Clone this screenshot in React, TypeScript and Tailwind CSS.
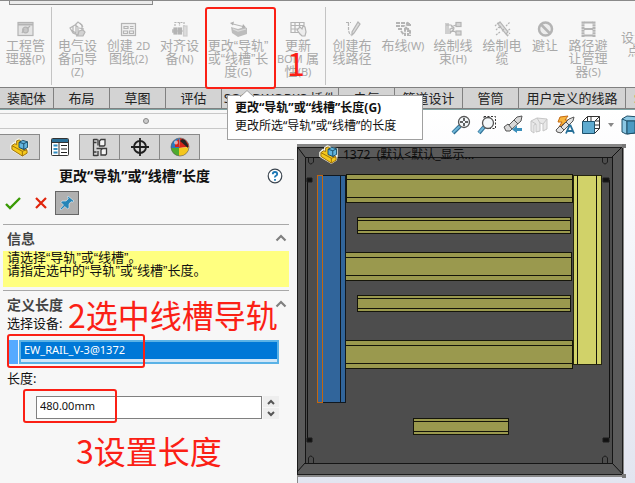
import React from "react";

const sans = "font-['Noto_Sans','Noto_Sans_CJK_SC',sans-serif]";

function Q({ children }: { children: React.ReactNode }) {
  return <span className="font-['Liberation_Sans',sans-serif] leading-none">{children}</span>;
}

function L({ children }: { children: React.ReactNode }) {
  return <span className="text-[11px] leading-none">{children}</span>;
}

function RibbonIcon({ children }: { children: React.ReactNode }) {
  return (
    <svg width="17" height="16" viewBox="0 0 17 16" fill="none" stroke="#b4b4b4" strokeWidth="1.2" aria-hidden="true">
      {children}
    </svg>
  );
}

function RibbonButton({ width, icon, children }: { width: string; icon?: React.ReactNode; children: React.ReactNode }) {
  return (
    <button
      type="button"
      className={`${width} flex shrink-0 flex-col items-center gap-[2px] pt-5 text-[13px] leading-[13px] whitespace-nowrap text-[#a9a9a9]`}
    >
      {icon}
      <span>{children}</span>
    </button>
  );
}

function Separator() {
  return <div className="mt-[6px] h-[78px] w-px shrink-0 bg-[#c4c4c4]" />;
}

function Ribbon() {
  return (
    <div className="relative flex h-[87px] overflow-hidden border-t border-[#8a8a8a] bg-[#f7f7f7]">
      <div className="absolute -top-px left-[9px] h-[5px] w-[144px] border border-t-0 border-[#8a8a8a] bg-[#ebebeb]" />
      <RibbonButton
        width="w-[51px]"
        icon={
          <RibbonIcon>
            <rect x="1" y="1.5" width="15" height="13" fill="#e4e4e4" />
            <path d="M1 3.5h15" strokeWidth="2" />
            <circle cx="8.5" cy="9" r="2.8" fill="#c8c8c8" />
            <path d="M5 12l2-4M10 8l3-3" />
          </RibbonIcon>
        }
      >
        工程管
        <br />
        理器<L>(P)</L>
      </RibbonButton>
      <Separator />
      <RibbonButton
        width="w-[51px]"
        icon={
          <RibbonIcon>
            <path d="M1 7l5-3 3 2v8l-5-2zM6 4l3-3 4 3v5M2 9l5 3M4 5v7M7 3v10" />
            <path d="M9 14l1-4 4-1 2 2-2 4H7z" fill="#d2d2d2" />
            <path d="M11 2l3 4M10 7l5 1" />
          </RibbonIcon>
        }
      >
        电气设
        <br />
        备向导
        <br />
        <L>(Z)</L>
      </RibbonButton>
      <RibbonButton
        width="w-[51px]"
        icon={
          <RibbonIcon>
            <rect x="1.5" y="2.5" width="14" height="12" fill="#efefef" />
            <path d="M4 5.5h4v2H4zM10 5.5h3.500M10 7.500h3.500M3.500 10h4v2.500h-4zM9.500 10h4v2.500h-4z" />
          </RibbonIcon>
        }
      >
        创建 <L>2D</L>
        <br />
        图纸<L>(2)</L>
      </RibbonButton>
      <RibbonButton
        width="w-[51px]"
        icon={
          <RibbonIcon>
            <path d="M4 5V1.500h9V5M8.500 1.500V5" strokeDasharray="2 1" />
            <path d="M2 8v4M1 10h15" />
            <rect x="3" y="7" width="3" height="6" fill="#b4b4b4" />
            <rect x="7.500" y="7" width="3" height="6" fill="#b4b4b4" />
            <rect x="12.500" y="5" width="3.500" height="10" fill="#dcdcdc" stroke="#cdcdcd" />
          </RibbonIcon>
        }
      >
        对齐设
        <br />
        备<L>(N)</L>
      </RibbonButton>
      <RibbonButton
        width="w-[66px]"
        icon={
          <RibbonIcon>
            <path d="M1 6l7 2 6-2 3 1v6l-9 3-6-4z" fill="#bdbdbd" stroke="none" />
            <path d="M3 3l10 2.500" strokeWidth="1" />
            <path d="M0 2l4-1.500-1 4zM16 6.500l-4 .5 1-4z" fill="#b0b0b0" stroke="none" />
            <path d="M3 8l5 2 8-2" stroke="#dcdcdc" />
          </RibbonIcon>
        }
      >
        更改<Q>“</Q>导轨<Q>”</Q>
        <br />
        或<Q>“</Q>线槽<Q>”</Q>长
        <br />
        度<L>(G)</L>
      </RibbonButton>
      <RibbonButton
        width="w-[54px]"
        icon={
          <RibbonIcon>
            <path d="M1 1.500h13v10H1zM1 4.500h13M1 8h13M5 1.500v10M9.500 1.500v10" />
            <path d="M7 9l3 4 2 2h3l1-4-1-5-2-1-1 3-2-2z" fill="#ededed" />
          </RibbonIcon>
        }
      >
        更新
        <br />
        <L>BOM</L> 属
        <br />
        性<L>(B)</L>
      </RibbonButton>
      <Separator />
      <RibbonButton
        width="w-[52px]"
        icon={
          <RibbonIcon>
            <path d="M2 1.500h5M4.500 2v6q0 5 3 6" strokeDasharray="3 1" />
            <path d="M14 1l2 2-6 9-2 2 0-3z" fill="#dedede" />
          </RibbonIcon>
        }
      >
        创建布
        <br />
        线路径
      </RibbonButton>
      <RibbonButton
        width="w-[50px]"
        icon={
          <RibbonIcon>
            <path d="M1 2h9l5 1M1 5h8q1 0 1 2v8M3 8h3v2l3 4M13 1l-2 6 4 3v5M12 4h4M13 7v8" strokeDasharray="4 1" strokeWidth="2" />
          </RibbonIcon>
        }
      >
        布线<L>(W)</L>
      </RibbonButton>
      <RibbonButton
        width="w-[50px]"
        icon={
          <RibbonIcon>
            <path d="M1 2v11M3 2v11M1 4h5l3 3-4 1v5M6 6l5-2M7 9l5 3M5 12l4-4" />
            <rect x="11" y="1.500" width="5" height="4" fill="#d6d6d6" />
            <rect x="11" y="10" width="5" height="4" fill="#d6d6d6" />
          </RibbonIcon>
        }
      >
        绘制线
        <br />
        束<L>(H)</L>
      </RibbonButton>
      <RibbonButton
        width="w-[48px]"
        icon={
          <RibbonIcon>
            <path d="M1 5l4-4M2 9l3-3M12 5l4-4M12 11l4-3M2 14l4-3M13 15l3-3" strokeDasharray="2 1" />
            <path d="M4 3l2-2 8 10-2 2zM7 5l-2 2M10 8l-2 2M12 13l2 2" fill="#dedede" />
          </RibbonIcon>
        }
      >
        绘制电
        <br />
        缆
      </RibbonButton>
      <RibbonButton
        width="w-[38px]"
        icon={
          <RibbonIcon>
            <circle cx="8.500" cy="8" r="6.500" strokeWidth="2.500" fill="#ededed" />
            <path d="M4 3.500l9 9" strokeWidth="2.500" />
          </RibbonIcon>
        }
      >
        避让
      </RibbonButton>
      <RibbonButton
        width="w-[48px]"
        icon={
          <RibbonIcon>
            <path d="M3 0.500v15.500M14 0.500v15.500" strokeWidth="3" strokeDasharray="2.200 0.500" />
            <path d="M4 1.500h9M4 8h9M4 14.500h9" strokeWidth="2" />
          </RibbonIcon>
        }
      >
        路径避
        <br />
        让管理
        <br />
        器<L>(S)</L>
      </RibbonButton>
      <button type="button" className="w-11 shrink-0 text-[13px] leading-[13px] whitespace-nowrap text-[#a9a9a9]">
        设置
        <br />
        点
      </button>
    </div>
  );
}

const tabs = [
  { label: "装配体", width: "w-[54px]" },
  { label: "布局", width: "w-14" },
  { label: "草图", width: "w-14" },
  { label: "评估", width: "w-14" },
  { label: "SOLIDWORKS 插件", width: "w-[117px]" },
  { label: "电气", width: "w-14" },
  { label: "管道设计", width: "w-[68px]" },
  { label: "管筒", width: "w-14" },
  { label: "用户定义的线路", width: "w-[107px]" },
];

function CommandTabs() {
  return (
    <nav className="flex h-[23px] overflow-hidden border-t border-b border-t-[#808080] border-b-[#7fa3a3] bg-[#d3d3d3] text-[13px] leading-5 whitespace-nowrap text-[#222]">
      {tabs.map((t) => (
        <button key={t.label} type="button" className={`${t.width} shrink-0 border-r border-b border-[#808080]`}>
          {t.label}
        </button>
      ))}
      <button type="button" className="shrink-0 border-b border-[#808080] pl-2 text-[#e09020]">
        S
      </button>
    </nav>
  );
}

function PartIcon({ size }: { size: number }) {
  return (
    <svg width={size} height={size} viewBox="0 0 20 20" strokeLinejoin="round" aria-hidden="true">
      <path d="M1 8l3-3 2 1V3l3-2 4 2 6 1v8l-1 4-5 3-12-7z" fill="#fff" stroke="#f4f4e8" strokeWidth="1.500" />
      <path d="M2 8l3-2 2 1V3l3-1 2 2v7l6 2v3l-5 3-11-7z" fill="#f5c91c" stroke="#9a6d08" />
      <path d="M2 8l11 6v5M13 14l5-2" fill="none" stroke="#9a6d08" />
      <path d="M9.500 4.500l4-2 5 1.500v6l-4 2-5-2z" fill="#62b4de" stroke="#174c68" />
      <path d="M9.500 4.500l5 1.500v6M14.500 6l4-2" fill="none" stroke="#174c68" />
    </svg>
  );
}

const panelTabIcons = [
  {
    name: "特征树",
    icon: <PartIcon size={19} />,
  },
  {
    name: "属性",
    icon: (
      <svg width="18" height="18" viewBox="0 0 18 18" aria-hidden="true">
        <rect x="0.500" y="0.500" width="17" height="17" rx="1" fill="#fff" stroke="#333" />
        <path d="M1 1h16v3H1z" fill="#2b6f96" />
        <path d="M1 4.500h16M8 4v13" stroke="#333" fill="none" />
        <path d="M2.500 7.500h4M2.500 11h4M2.500 14.500h4" stroke="#2f8bc0" strokeWidth="2" />
        <path d="M10 7.500h6M10 11h6M10 14.500h6" stroke="#222" strokeWidth="1.200" />
      </svg>
    ),
  },
  {
    name: "配置",
    icon: (
      <svg width="16" height="19" viewBox="0 0 16 19" fill="none" stroke="#3c3c3c" strokeWidth="1.300" aria-hidden="true">
        <path d="M1.500 1v17M1.500 1.500h4M1.500 4.500h3M1.500 17.500h4M1.500 14h3M4.500 10.500h6M6 1.500v6M6 13v5" />
        <path d="M7.500 3l1.500-1.500h4V7l-1 1H7.500zM9 12l1.500-1.500h4V16l-1 1H9z" fill="#f5f5f5" />
      </svg>
    ),
  },
  {
    name: "尺寸",
    icon: (
      <svg width="18" height="18" viewBox="0 0 18 18" fill="none" stroke="#1f1f1f" aria-hidden="true">
        <circle cx="9" cy="9" r="6" strokeWidth="1.800" />
        <path d="M9 0v18M0 9h18" strokeWidth="1.800" />
      </svg>
    ),
  },
  {
    name: "外观",
    icon: (
      <svg width="20" height="20" viewBox="0 0 20 20" aria-hidden="true">
        <circle cx="10" cy="10" r="9" fill="#fff" />
        <path d="M10 1a9 9 0 0 0-9 10h8z" fill="#2d77bd" />
        <path d="M10 1a9 9 0 0 1 9 9l-10 1z" fill="#d52418" />
        <path d="M1 11a9 9 0 0 0 8 8v-8z" fill="#4faa2d" />
        <path d="M9 19a9 9 0 0 0 10-9l-10 1z" fill="#f4c61d" />
        <path d="M10 4l2-2 3 1 3 5v3z" fill="#222" />
        <path d="M5 5l4-3v8H5z" fill="#d52418" />
        <circle cx="6" cy="5.500" r="2" fill="#fff" opacity="0.600" />
        <circle cx="10" cy="10" r="9" fill="none" stroke="#555" strokeWidth="0.600" />
      </svg>
    ),
  },
];

function Chevron() {
  return (
    <svg width="12" height="8" viewBox="0 0 12 8" fill="none" stroke="#808080" strokeWidth="2.200" aria-hidden="true">
      <path d="M1.500 6.500L6 2l4.500 4.500" />
    </svg>
  );
}

function SectionHeader({ children }: { children: React.ReactNode }) {
  return (
    <div className="flex h-[27px] items-center justify-between border-t border-[#a8a8a8] pr-[2px] pl-1 text-[#444]">
      <h2 className="text-[14px] font-bold">{children}</h2>
      <button type="button" aria-label="折叠">
        <Chevron />
      </button>
    </div>
  );
}

function PropertyPanel() {
  return (
    <aside className="w-[297px] shrink-0 bg-[#f7f7f7] pt-[3px] text-[13px] text-[#111]">
      <div className="flex h-4 items-center justify-center border-t border-b border-[#c8c8c8] pr-[6px]">
        <span className="h-[6px] w-[6px] rounded-full border border-[#888] bg-[#ccc]" />
      </div>
      <div className="mt-[5px] mr-[3px] flex h-[26px]">
        {panelTabIcons.map((t, i) => (
          <button
            key={t.name}
            type="button"
            aria-label={t.name}
            className={
              i === 1
                ? "flex w-10 items-center justify-center border-r border-[#8a8a8a]"
                : "flex w-10 items-center justify-center border-t border-r border-b border-[#8a8a8a] bg-[#d5d5d5]"
            }
          >
            {t.icon}
          </button>
        ))}
        <div className="flex-1 border-b border-[#a8a8a8]" />
      </div>

      <div className="flex h-[31px] items-center justify-between pr-[14px] pl-[59px]">
        <h1 className="text-[14px] font-bold">更改“导轨”或“线槽”长度</h1>
        <button type="button" aria-label="帮助">
          <svg width="16" height="16" viewBox="0 0 16 16" fill="none" aria-hidden="true">
            <circle cx="8" cy="8" r="6.800" fill="#fff" stroke="#3c4650" strokeWidth="1.200" />
            <path d="M5.800 6.200q0-2.200 2.200-2.200t2.200 2q0 1.200-1.200 1.800t-1 1.700M8 11v1.700" stroke="#1d78b5" strokeWidth="1.800" />
          </svg>
        </button>
      </div>
      <div className="flex h-[33px] items-start pl-[5px]">
        <button type="button" aria-label="确定" className="mt-[5px] mr-[14px]">
          <svg width="16" height="14" viewBox="0 0 16 14" fill="none" stroke="#3a9a05" strokeWidth="2.400" aria-hidden="true">
            <path d="M1 8l4 4L15 2" />
          </svg>
        </button>
        <button type="button" aria-label="取消" className="mt-[6px] mr-[8px]">
          <svg width="12" height="12" viewBox="0 0 12 12" fill="none" stroke="#e0240c" strokeWidth="2.200" aria-hidden="true">
            <path d="M1 1l10 10M11 1L1 11" />
          </svg>
        </button>
        <button
          type="button"
          aria-label="保持可见"
          className="flex h-6 w-6 items-center justify-center border border-[#666] bg-[#b0b0b0]"
        >
          <svg width="16" height="16" viewBox="0 0 16 16" aria-hidden="true">
            <path
              d="M9 1l6 5-1.500 1-1.500-.3L10 9v4l-1.500 1L6 11.500 2 15l-1-1 3.500-4L2 7.500 3 6h4l2.300-2.200L8.500 2z"
              fill="#2585b8"
              stroke="#e8f4fa"
              strokeWidth="0.600"
            />
          </svg>
        </button>
      </div>

      <div className="mr-2 ml-[3px]">
        <SectionHeader>信息</SectionHeader>
        <p className="mb-[3px] h-9 bg-[#ffff80] pl-1 leading-[13px] whitespace-nowrap">
          请选择<Q>“</Q>导轨<Q>”</Q>或<Q>“</Q>线槽<Q>”</Q>。
          <br />
          请指定选中的<Q>“</Q>导轨<Q>”</Q>或<Q>“</Q>线槽<Q>”</Q>长度。
        </p>
        <SectionHeader>定义长度</SectionHeader>
        <div className="pl-1">
          <label htmlFor="device" className="block h-[23px] leading-[13px]">
            选择设备:
          </label>
          <div className="mr-[10px] ml-[2px] flex h-6 gap-px">
            <span className="w-[9px] bg-[#56aaff]" />
            <span className="flex min-w-0 flex-1 border-2 border-[#5ab2e6] bg-[#cfe6f8] pb-[3px]">
              <input
                id="device"
                readOnly
                value="EW_RAIL_V-3@1372"
                className="min-w-0 flex-1 bg-[#0078d7] pl-[3px] text-[11px] text-white outline-none"
              />
            </span>
          </div>
          <label htmlFor="length" className="mt-1 block h-[28px] leading-[20px]">
            长度:
          </label>
          <div className="mr-[10px] ml-[29px] flex h-[23px] gap-px">
            <input
              id="length"
              defaultValue="480.00mm"
              className="min-w-0 flex-1 border border-[#808080] bg-white pb-0.5 pl-[3px] text-[11px] outline-none"
            />
            <span className="flex w-4 flex-col gap-px">
              <button type="button" aria-label="增加" className="flex flex-1 items-center justify-center bg-[#eeeeee]">
                <svg width="8" height="6" viewBox="0 0 8 6" fill="none" stroke="#555" strokeWidth="2" aria-hidden="true">
                  <path d="M1 5l3-3 3 3" />
                </svg>
              </button>
              <button type="button" aria-label="减少" className="flex flex-1 items-center justify-center bg-[#eeeeee]">
                <svg width="8" height="6" viewBox="0 0 8 6" fill="none" stroke="#555" strokeWidth="2" aria-hidden="true">
                  <path d="M1 1l3 3 3-3" />
                </svg>
              </button>
            </span>
          </div>
        </div>
      </div>
    </aside>
  );
}

function Lens({ cx, cy }: { cx: number; cy: number }) {
  return (
    <>
      <path d={`M2 18L${cx - 4} ${cy + 4}`} stroke="#2d6f94" strokeWidth="4" />
      <path d={`M2 17.500L${cx - 4} ${cy + 4}`} stroke="#6fb6d8" strokeWidth="2" />
      <circle cx={cx} cy={cy} r="5.500" fill="#f4f8fa" stroke="#555" strokeWidth="1.300" />
    </>
  );
}

function ViewToolbar() {
  const box = { width: 20, height: 20, viewBox: "0 0 20 20", fill: "none" };
  return (
    <div className="flex h-[34px] shrink-0 items-center justify-end gap-[6px] pb-1">
      <button type="button" aria-label="整屏显示全图">
        <svg {...box}>
          <Lens cx={13} cy={7} />
          <path d="M13 3v3M13 8v3M9 7h3M14 7h3" stroke="#333" strokeWidth="1.500" />
        </svg>
      </button>
      <button type="button" aria-label="局部放大">
        <svg {...box}>
          <path d="M7 1.500h11.500v12H7z" stroke="#333" strokeDasharray="2 1.500" />
          <Lens cx={11} cy={8} />
        </svg>
      </button>
      <button type="button" aria-label="上一视图">
        <svg {...box}>
          <path d="M1 12l4-3 1 1 8-8 5-1-1 5-9 8-2 2H3z" fill="#d8d8d8" stroke="#555" />
          <path d="M5 9l4 5M11 5l4 4" stroke="#555" />
          <path d="M9 14.500l5-4v2.500h5v3h-5V18z" fill="#3a8fbb" />
        </svg>
      </button>
      <button type="button" aria-label="剖面视图">
        <svg {...box} fill="#e8e8e8" stroke="#c6c6c6">
          <path d="M2 6l6-3 10 1v10l-4 2V9l-3-1v8l-4 1V9l-2 1v8l-3-2z" />
          <path d="M2 6l5 3M8 3l3 5M14 9l4-5" />
        </svg>
      </button>
      <button type="button" aria-label="动态注解">
        <svg {...box}>
          <path d="M5 2l8-1-3 4h4L4 12l3-5H3z" fill="#f8b53c" stroke="#c46a12" />
          <path d="M1 15l4-4 1 1 8-8 5-2-1 4-9 9-3 3-4-1z" fill="#e2e2e2" stroke="#555" />
          <path d="M5 11l4 4M11 7l3 3" stroke="#555" />
          <path d="M11 18.500l3.500-8h1l3.500 8M12 16h6" stroke="#256f98" strokeWidth="1.800" />
        </svg>
      </button>
      <button type="button" aria-label="视图定向">
        <svg {...box}>
          <path d="M1.500 6.500l5-5h12v12l-5 5M6.500 1.500v5M13.500 6.500l5-5M10 1v5M18 6h-4M18 10h-4M18.500 13.500h-5" stroke="#333" />
          <path d="M1.500 6.500h12v12h-12z" fill="#5fabd0" stroke="#1f536e" />
        </svg>
      </button>
      <svg width="6" height="4" viewBox="0 0 6 4" className="mx-px" aria-hidden="true">
        <path d="M0 0h6L3 4z" fill="#888" />
      </svg>
      <button type="button" aria-label="显示样式" className="w-[14px] overflow-hidden">
        <svg {...box}>
          <path d="M1 4l5-3 12 1-4 4v12l-9 1-4-2z" fill="#8cc8e4" stroke="#1f4f68" />
          <path d="M1 4l5 2v13M6 6l8 0" stroke="#1f4f68" />
          <path d="M6 6h8v12l-8 1z" fill="#4b9ac2" stroke="#1f4f68" />
        </svg>
      </button>
    </div>
  );
}

type Duct = [x: number, y: number, w: number, h: number, inset: number];
const ducts: Duct[] = [
  [346.5, 174.5, 226, 28, 5],
  [357.5, 217.5, 213, 16, 3],
  [345.5, 252.5, 226, 28, 5],
  [357.5, 295.5, 213, 16, 3],
  [345.5, 340.5, 227, 28, 5],
  [413.5, 418.5, 95, 16, 3],
];

function Cabinet() {
  return (
    <svg width="338" height="339" viewBox="297 144 338 339" className="block shrink-0" shapeRendering="crispEdges" aria-hidden="true">
      <rect x="297" y="144" width="327" height="333" fill="#878787" />
      <path d="M297.500 477v6" stroke="#888" />
      <rect x="297" y="147" width="325" height="327" fill="#5a5a5a" stroke="#1c1c1c" />
      <rect x="622" y="144" width="4" height="4" fill="#777" />
      <rect x="622" y="474" width="4" height="4" fill="#777" />
      <rect x="305" y="157" width="307" height="306" fill="#4d4d4d" stroke="#151515" />
      <path d="M297.500 147l7.500 10M621.500 147.500L612 157M297 472l8-9M621.500 473L612 463" stroke="#111" fill="none" shapeRendering="auto" />
      <path d="M307.500 180v259M609.500 180v258" stroke="#111" fill="none" />
      <g fill="none" stroke="#1c1c1c" shapeRendering="auto">
        <path d="M308.500 158v4q2 4 5 0v-4M602.500 158v4q2.500 4 5 0v-4M308.500 463v-5q2-4 5 0v5M602.500 463v-5q2.500-4 5 0v5" />
        <path d="M307 178h5v4h-5zM603 178h6v4h-6zM307 438h5v4h-5zM603 438h6v4h-6z" fill="#111" />
      </g>
      {ducts.map(([x, y, w, h, inset]) => (
        <g key={`${x}-${y}`} stroke="#15150a" fill="none">
          <rect x={x} y={y} width={w} height={h} fill="#9a994e" />
          <path d={`M${x} ${y + inset}h${w}M${x} ${y + h - inset}h${w}`} />
        </g>
      ))}
      <rect x="317.500" y="175.500" width="28" height="227" fill="#31659b" stroke="#101820" />
      <path d="M340.500 175v227" stroke="#101820" />
      <rect x="317.500" y="175.500" width="5" height="227" fill="none" stroke="#c4660e" />
      <rect x="573.500" y="175.500" width="28" height="189" fill="#d1d269" stroke="#25250f" />
      <path d="M577.500 175v189M596.500 175v189" stroke="#15150a" />
    </svg>
  );
}

function Viewport() {
  return (
    <main className="relative flex min-w-0 flex-1 flex-col overflow-hidden bg-linear-to-b from-white to-[#e2e5f0]">
      <ViewToolbar />
      <Cabinet />
      <div className="absolute top-[35px] left-[22px] flex items-center gap-[5px] text-[12px] whitespace-nowrap text-[#0c0c0c]">
        <PartIcon size={19} />
        <span>1372&nbsp; (默认&lt;默认_显示...</span>
      </div>
    </main>
  );
}

function Tooltip() {
  return (
    <div
      role="tooltip"
      className="absolute top-[95px] left-[227px] w-[196px] border border-[#a0a0a0] bg-white px-[7px] pt-[3px] pb-[4px] text-[12px] leading-[18px] whitespace-nowrap text-[#111]"
    >
      <svg width="14" height="7" viewBox="0 0 14 7" className="absolute -top-[6px] left-[12px]" aria-hidden="true">
        <path d="M0 7l7-6.500L14 7" fill="#fff" stroke="#a0a0a0" />
      </svg>
      <div className="font-bold">更改“导轨”或“线槽”长度(G)</div>
      <div>更改所选“导轨”或“线槽”的长度</div>
    </div>
  );
}

function Annotations() {
  const box = "absolute rounded-[3px] border-2 border-[#fb2015]";
  const note = "absolute text-[32px] leading-[32px] whitespace-nowrap text-[#fb2015] font-['Noto_Sans_CJK_SC',sans-serif]";
  return (
    <div className="pointer-events-none">
      <div className={`${box} top-[7px] left-[205px] h-[82px] w-[71px]`} />
      <div className={`${box} top-[334px] left-[7px] h-[34px] w-[138px]`} />
      <div className={`${box} top-[389px] left-[23px] h-[34px] w-[94px]`} />
      <span className={`${note} top-[46px] left-[287px]`}>1</span>
      <span className={`${note} top-[298px] left-[68px]`}>2选中线槽导轨</span>
      <span className={`${note} top-[434px] left-[76px]`}>3设置长度</span>
    </div>
  );
}

export default function App() {
  return (
    <div className={`relative flex min-h-screen flex-col overflow-hidden bg-[#f7f7f7] ${sans}`}>
      <Ribbon />
      <CommandTabs />
      <div className="flex flex-1">
        <PropertyPanel />
        <Viewport />
      </div>
      <Tooltip />
      <Annotations />
    </div>
  );
}
